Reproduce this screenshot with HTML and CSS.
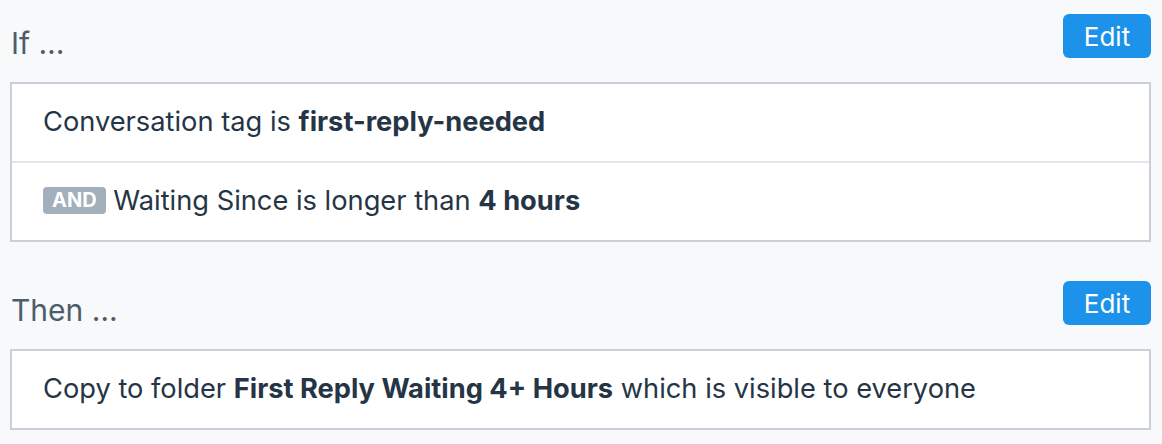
FILE: index.html
```html
<!DOCTYPE html>
<html lang="en">
<head>
  <meta charset="UTF-8" />
  <meta name="viewport" content="width=device-width, initial-scale=1" />
  <title>Workflow - Conditions</title>
  <link rel="stylesheet" href="styles.css">
</head>
<body>
  <main class="workflow">
    <section class="rule-section" aria-label="Conditions">
      <header class="rule-header">
        <h2>If …</h2>
        <button class="edit-btn" type="button">Edit</button>
      </header>
      <div class="rule-box">
        <div class="rule-row">Conversation tag is <strong>first-reply-needed</strong></div>
        <div class="rule-row"><span class="op-badge">AND</span> Waiting Since is longer than <strong>4 hours</strong></div>
      </div>
    </section>

    <section class="rule-section" aria-label="Actions">
      <header class="rule-header">
        <h2>Then …</h2>
        <button class="edit-btn" type="button">Edit</button>
      </header>
      <div class="rule-box">
        <div class="rule-row">Copy to folder <strong>First Reply Waiting 4+ Hours</strong> which is visible to everyone</div>
      </div>
    </section>
  </main>
</body>
</html>
```

FILE: styles.css
```css
:root {
  --bg: #f8f9fa;
  --text: #253545;
  --heading: #4f5d6b;
  --border: #c9d0d7;
  --divider: #e3e7eb;
  --blue: #1d92eb;
  --badge: #a3afbb;
  --font-family: Inter, 'Noto Sans', sans-serif;
}
body {
  margin: 0;
  background: var(--bg);
  color: var(--text);
  font-family: var(--font-family);
}
.workflow {
  padding: 14px 11px 0 10px;
  display: flex;
  flex-direction: column;
  gap: 39px;
}
.rule-header {
  display: flex;
  justify-content: space-between;
  align-items: flex-start;
  height: 44px;
  margin-bottom: 24px;
}
.rule-header h2 {
  margin: 0;
  padding: 13px 0 0 1px;
  font-size: 30px;
  line-height: 32px;
  font-weight: 400;
  color: var(--heading);
}
.edit-btn {
  width: 88px;
  height: 44px;
  border: none;
  border-radius: 6px;
  background: var(--blue);
  color: #fff;
  font-family: var(--font-family);
  font-size: 26px;
  padding: 0;
  cursor: pointer;
}
.rule-box {
  background: #fff;
  border: 2px solid var(--border);
}
.rule-row {
  padding: 19px 31px 20px;
  font-size: 27.25px;
  line-height: 38px;
}
.rule-row + .rule-row {
  border-top: 2px solid var(--divider);
}
.rule-row strong {
  font-weight: 700;
}
.op-badge {
  display: inline-block;
  background: var(--badge);
  color: #fff;
  font-size: 20px;
  font-weight: 700;
  line-height: 27px;
  padding: 0 9px;
  border-radius: 4px;
  vertical-align: 3px;
}
```
